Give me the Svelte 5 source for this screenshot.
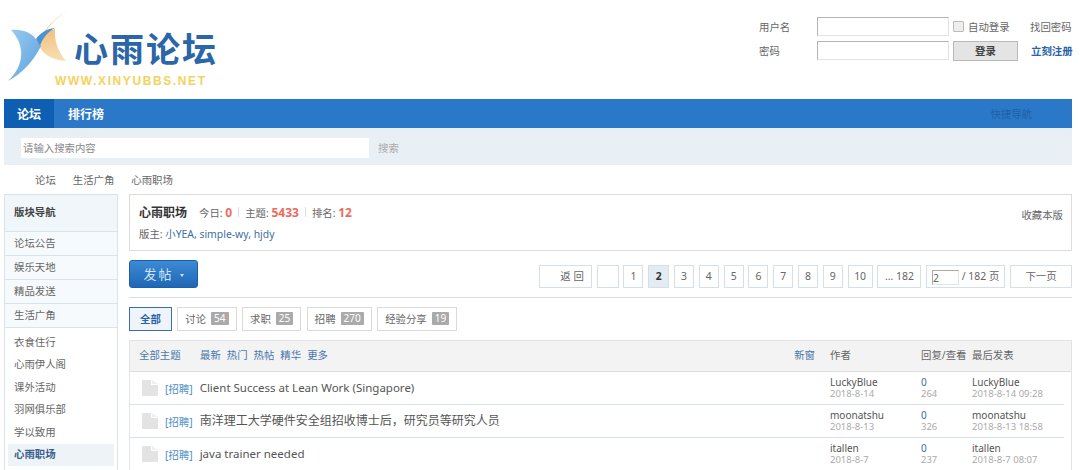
<script>
  const sideTop = ['论坛公告', '娱乐天地', '精品发送', '生活广角'];
  const sideSub = ['衣食住行', '心雨伊人阁', '课外活动', '羽网俱乐部', '学以致用', '心雨职场'];
  const pages = ['1', '2', '3', '4', '5', '6', '7', '8', '9', '10', '... 182'];
  const tabs = [
    { name: '全部' },
    { name: '讨论', n: 54 },
    { name: '求职', n: 25 },
    { name: '招聘', n: 270 },
    { name: '经验分享', n: 19 }
  ];
  const threads = [
    { title: 'Client Success at Lean Work (Singapore)', author: 'LuckyBlue', date: '2018-8-14', views: 264, last: '2018-8-14 09:28' },
    { title: '南洋理工大学硬件安全组招收博士后，研究员等研究人员', cjk: true, author: 'moonatshu', date: '2018-8-13', views: 326, last: '2018-8-13 18:58' },
    { title: 'java trainer needed', author: 'itallen', date: '2018-8-7', views: 237, last: '2018-8-7 08:07' }
  ];
</script>

<div class="page">
  <header class="top">
    <div class="logo">
      <svg class="wings" width="72" height="90" viewBox="0 0 72 90">
        <defs>
          <linearGradient id="blueWing" x1="0" y1="0" x2="1" y2="1">
            <stop offset="0" stop-color="#9cccf2" />
            <stop offset="1" stop-color="#5a9fdc" />
          </linearGradient>
          <linearGradient id="goldWing" x1="0" y1="0" x2="0" y2="1">
            <stop offset="0" stop-color="#f0ae58" />
            <stop offset="1" stop-color="#f7dfb6" />
          </linearGradient>
        </defs>
        <path d="M69 10 C57 17 48 25 44 33 L55 29 C54 40 58 52 66 61 C52 60 44 55 39 46 C42 33 52 20 69 10 Z" fill="url(#goldWing)" />
        <path d="M11 30 C22 29 32 32 38 42 L41 46 C34 60 22 74 8 81 C24 66 26 46 11 30 Z" fill="url(#blueWing)" />
        <path d="M36 39 C40 33 46 29 55 28 C48 32 43 37 40 46 Z" fill="#4a94d4" />
      </svg>
      <div class="logo-text">
        <div class="logo-name">心雨论坛</div>
        <div class="logo-url">WWW.XINYUBBS.NET</div>
      </div>
    </div>
    <div class="login">
      <div class="login-row">
        <span class="login-label">用户名</span>
        <input class="login-input" type="text" />
        <label class="remember"><span class="check"></span>自动登录</label>
        <span class="login-link">找回密码</span>
      </div>
      <div class="login-row">
        <span class="login-label">密码</span>
        <input class="login-input" type="password" />
        <button class="login-btn" type="button">登录</button>
        <span class="login-link reg">立刻注册</span>
      </div>
    </div>
  </header>

  <nav class="nav">
    <span class="nav-item active">论坛</span>
    <span class="nav-item">排行榜</span>
    <span class="quick">快捷导航</span>
  </nav>

  <div class="search">
    <div class="search-box">请输入搜索内容</div>
    <span class="search-btn">搜索</span>
  </div>

  <div class="crumbs">
    <span>论坛</span>
    <span>生活广角</span>
    <span>心雨职场</span>
  </div>

  <div class="columns">
    <aside class="side">
      <div class="side-head">版块导航</div>
      {#each sideTop as item}
        <div class="side-top">{item}</div>
      {/each}
      <div class="side-subs">
        {#each sideSub as item, i}
          <div class="side-sub" class:current={i === sideSub.length - 1}>{item}</div>
        {/each}
      </div>
    </aside>

    <main class="main">
      <section class="info">
        <div class="info-left">
          <div class="info-line">
            <strong class="forum-name">心雨职场</strong>
            <span class="stat">今日: <b>0</b></span>
            <i class="pipe"></i>
            <span class="stat">主题: <b>5433</b></span>
            <i class="pipe"></i>
            <span class="stat">排名: <b>12</b></span>
          </div>
          <div class="mods">版主: <span class="mod-names">小YEA, simple-wy, hjdy</span></div>
        </div>
        <span class="collect">收藏本版</span>
      </section>

      <div class="pager-row">
        <button class="post" type="button">发帖<span class="caret"></span></button>
        <div class="pager">
          <span class="pg back">返 回</span>
          <span class="pg blank"></span>
          {#each pages as p}
            <span class="pg" class:on={p === '2'} class:ten={p === '10'} class:more={p.length > 2}>{p}</span>
          {/each}
          <span class="pg jump"><span class="jump-input">2</span> / 182 页</span>
          <span class="pg next">下一页</span>
        </div>
      </div>

      <div class="tabs">
        {#each tabs as t, i}
          <span class="tab" class:sel={i === 0}>{t.name}{#if t.n}<em>{t.n}</em>{/if}</span>
        {/each}
      </div>

      <section class="table">
        <div class="thead">
          <div class="col-title">
            <span class="all">全部主题</span>
            <span class="filters">
              <span>最新</span><span>热门</span><span>热帖</span><span>精华</span><span>更多</span>
            </span>
            <span class="newwin">新窗</span>
          </div>
          <div class="col-author">作者</div>
          <div class="col-count">回复/查看</div>
          <div class="col-last">最后发表</div>
        </div>
        {#each threads as t}
          <div class="row">
            <div class="col-title">
              <svg class="doc" width="16" height="16" viewBox="0 0 16 16">
                <path d="M0 1 Q0 0 1 0 L9 0 L9 5 L16 5 L16 15 Q16 16 15 16 L1 16 Q0 16 0 15 Z" fill="#e3e3e3" />
                <path d="M10 0 L16 4 L10 4 Z" fill="#efefef" />
              </svg>
              <span class="tag">[招聘]</span>
              <span class="title" class:cjk={t.cjk}>{t.title}</span>
            </div>
            <div class="col-author"><div class="name">{t.author}</div><div class="sub">{t.date}</div></div>
            <div class="col-count"><div class="reply">0</div><div class="sub">{t.views}</div></div>
            <div class="col-last"><div class="name">{t.author}</div><div class="sub">{t.last}</div></div>
          </div>
        {/each}
      </section>
    </main>
  </div>
</div>

<style>
  :global(body) {
    margin: 0;
    background: #fff;
    overflow: hidden;
  }
  .page {
    width: 1080px;
    height: 470px;
    overflow: hidden;
    font-family: "Noto Sans", "Noto Sans CJK SC", sans-serif;
    font-size: 10.4px;
    color: #666;
    box-sizing: border-box;
  }
  .top {
    height: 99px;
    display: flex;
    justify-content: space-between;
    box-sizing: border-box;
  }
  .logo {
    display: flex;
  }
  .wings {
    flex: none;
  }
  .logo-text {
    margin-left: -17px;
    padding-top: 29px;
  }
  .logo-name {
    padding-left: 19px;
    font-family: "Noto Sans CJK SC", sans-serif;
    font-size: 34px;
    line-height: 38px;
    font-weight: 700;
    color: #2a66a8;
    letter-spacing: 2px;
    white-space: nowrap;
  }
  .logo-url {
    font-family: "Liberation Sans", sans-serif;
    font-size: 12px;
    line-height: 14px;
    font-weight: 700;
    letter-spacing: 1.6px;
    color: #f5d25c;
    margin-top: 7px;
    white-space: nowrap;
  }
  .login {
    width: 321px;
    padding-top: 16px;
    box-sizing: border-box;
  }
  .login-row {
    display: flex;
    align-items: center;
    height: 21px;
    margin-bottom: 3px;
  }
  .login-label {
    width: 58px;
  }
  .login-input {
    width: 132px;
    height: 19px;
    box-sizing: border-box;
    margin: 0;
    padding: 0;
    border: 1px solid #b5b5b5;
    border-bottom-color: #e2e2e2;
    border-right-color: #e2e2e2;
    background: #fff;
  }
  .remember {
    width: 77px;
    margin-left: 4px;
    box-sizing: border-box;
    display: flex;
    align-items: center;
    gap: 4px;
  }
  .check {
    width: 9px;
    height: 9px;
    border: 1px solid #bbb;
    border-radius: 1px;
    background: #eee;
  }
  .login-link {
    white-space: nowrap;
  }
  .reg {
    color: #2a62a8;
    font-weight: 700;
  }
  .login-btn {
    width: 65px;
    height: 20px;
    margin: 0 13px 0 4px;
    padding: 0;
    border: 1px solid #b9b9b9;
    background: #e4e4e4;
    font: 700 10.4px "Noto Sans", "Noto Sans CJK SC", sans-serif;
    color: #444;
  }
  .nav {
    margin: 0 8px 0 4px;
    height: 29px;
    background: #2b78c9;
    display: flex;
    align-items: stretch;
    color: #fff;
    font-size: 12px;
    font-weight: 700;
  }
  .nav-item {
    display: flex;
    align-items: center;
    padding: 0 13px;
  }
  .nav-item + .nav-item {
    padding-left: 14px;
  }
  .nav-item.active {
    background: #0e5fb4;
  }
  .quick {
    margin-left: auto;
    padding-right: 40px;
    align-self: center;
    font-size: 10.4px;
    font-weight: 400;
    color: #1d60a8;
  }
  .search {
    margin: 0 8px 0 4px;
    height: 37px;
    background: #e8eff5;
    display: flex;
    align-items: center;
    padding-left: 17px;
    padding-top: 2px;
    box-sizing: border-box;
  }
  .search-box {
    width: 348px;
    height: 20px;
    line-height: 21px;
    background: #fff;
    padding-left: 2px;
    box-sizing: border-box;
    color: #888;
  }
  .search-btn {
    margin-left: 9px;
    color: #aaa;
  }
  .crumbs {
    height: 29px;
    padding-left: 35px;
    display: flex;
    align-items: center;
    gap: 17px;
    color: #666;
  }
  .columns {
    display: flex;
    align-items: flex-start;
    margin-left: 4px;
    width: 1068px;
    gap: 11px;
  }
  .side {
    width: 114px;
    flex: none;
    height: 290px;
    box-sizing: border-box;
    border: 1px solid #d7e3ed;
    border-bottom: 0;
  }
  .side-head {
    height: 37px;
    line-height: 35px;
    padding-left: 9px;
    background: #f1f6fa;
    font-weight: 700;
    color: #444;
    border-bottom: 1px solid #d7e3ed;
    box-sizing: border-box;
  }
  .side-top {
    height: 24px;
    line-height: 22px;
    padding-left: 9px;
    background: #f7fafc;
    border-bottom: 1px solid #d7e3ed;
    box-sizing: border-box;
  }
  .side-subs {
    padding: 4px 3px 0;
  }
  .side-sub {
    height: 22.4px;
    line-height: 20.4px;
    padding-left: 6px;
  }
  .side-sub.current {
    background: #eef3f8;
    font-weight: 700;
    color: #3a5f8f;
  }
  .main {
    flex: 1;
    min-width: 0;
  }
  .info {
    height: 57px;
    box-sizing: border-box;
    border: 1px solid #dcdcdc;
    padding: 9px 8px 0 9px;
    display: flex;
    justify-content: space-between;
  }
  .info-line {
    display: flex;
    align-items: center;
    height: 16px;
  }
  .forum-name {
    font-size: 12px;
    color: #333;
    margin-right: 12px;
  }
  .stat b {
    color: #ee6a5f;
    font-size: 12px;
  }
  .pipe {
    width: 1px;
    height: 10px;
    background: #ddd;
    margin: 0 6px;
  }
  .mods {
    margin-top: 6px;
  }
  .mod-names {
    color: #3a6ea5;
  }
  .collect {
    margin-top: 3px;
  }
  .pager-row {
    display: flex;
    justify-content: space-between;
    height: 47px;
    padding-top: 9px;
    box-sizing: border-box;
    border-bottom: 1px solid #ddd;
  }
  .post {
    width: 69px;
    height: 28px;
    padding: 0 0 2px;
    border: 1px solid #1c5fa8;
    border-radius: 3px;
    background: linear-gradient(#3c8ad6, #1f67b5);
    color: #d5e4f7;
    font: 13px "Noto Sans", "Noto Sans CJK SC", sans-serif;
    letter-spacing: 2px;
  }
  .caret {
    display: inline-block;
    vertical-align: middle;
    margin-left: 6px;
    border: 2px solid transparent;
    border-top: 3px solid #d5e4f7;
    border-bottom: 0;
  }
  .pager {
    display: flex;
    gap: 4.8px;
    height: 23px;
    margin-top: 5px;
  }
  .pg {
    width: 20px;
    height: 23px;
    line-height: 21px;
    box-sizing: border-box;
    border: 1px solid #d3e0ea;
    text-align: center;
    color: #666;
    white-space: nowrap;
  }
  .pg.on {
    width: 21px;
    background: #e3ecf3;
    font-weight: 700;
    color: #333;
  }
  .pg.ten {
    width: 25px;
  }
  .pg.more {
    width: 44px;
  }
  .back {
    width: 53px;
    text-align: right;
    padding-right: 7px;
  }
  .blank {
    width: 22px;
  }
  .jump {
    width: 79px;
  }
  .jump-input {
    display: inline-block;
    width: 27px;
    height: 15px;
    line-height: 15px;
    text-align: left;
    border: 1px solid #aaa;
    border-right-color: #e3e3e3;
    border-bottom-color: #e3e3e3;
    box-sizing: border-box;
    vertical-align: middle;
  }
  .next {
    width: 62px;
  }
  .tabs {
    display: flex;
    gap: 5.5px;
    margin-top: 9px;
    height: 24px;
  }
  .tab {
    display: flex;
    align-items: center;
    padding: 0 7px 2px;
    box-sizing: border-box;
    border: 1px solid #d9d9d9;
    white-space: nowrap;
  }
  .tab em {
    font-style: normal;
    background: #aaa;
    color: #fff;
    font-size: 10px;
    line-height: 13px;
    padding: 0 3px;
    margin-left: 5px;
    border-radius: 1px;
  }
  .tab.sel {
    background: #eef4f9;
    border-color: #3b6ea5;
    color: #2a62a8;
    font-weight: 700;
    padding: 0 10px 2px;
  }
  .table {
    margin-top: 9px;
    border-right: 1px solid #e3e3e3;
    border-left: 1px solid #e3e3e3;
  }
  .thead {
    height: 32px;
    padding-bottom: 3px;
    background: #f3f3f3;
    border-top: 1px solid #e3e3e3;
    border-bottom: 1px solid #ddd;
    box-sizing: border-box;
    display: flex;
    align-items: center;
    color: #666;
  }
  .thead .col-title {
    color: #4a78ab;
    padding-left: 9px;
  }
  .col-title {
    width: 700px;
    flex: none;
    display: flex;
    align-items: center;
    box-sizing: border-box;
  }
  .all {
    width: 61px;
  }
  .filters {
    display: flex;
    gap: 6px;
  }
  .newwin {
    margin-left: auto;
    margin-right: 15px;
  }
  .col-author {
    width: 91px;
    flex: none;
  }
  .col-count {
    width: 51px;
    flex: none;
    white-space: nowrap;
  }
  .col-last {
    flex: 1;
    white-space: nowrap;
  }
  .row {
    height: 33px;
    margin-right: 7px;
    border-bottom: 1px solid #d8e2ea;
    box-sizing: border-box;
    display: flex;
    align-items: center;
  }
  .row .col-title {
    padding-left: 12px;
  }
  .doc {
    flex: none;
    margin-right: 7px;
  }
  .tag {
    color: #4d8fc8;
    margin-right: 7px;
  }
  .title {
    font-size: 11.5px;
    color: #555;
    margin-bottom: 2px;
  }
  .title.cjk {
    font-size: 12px;
  }
  .name {
    font-size: 10px;
    line-height: 12px;
    color: #555;
  }
  .reply {
    font-size: 10px;
    line-height: 12px;
    color: #3a6ea5;
  }
  .sub {
    font-size: 9.5px;
    line-height: 12px;
    color: #aaa;
  }
</style>
